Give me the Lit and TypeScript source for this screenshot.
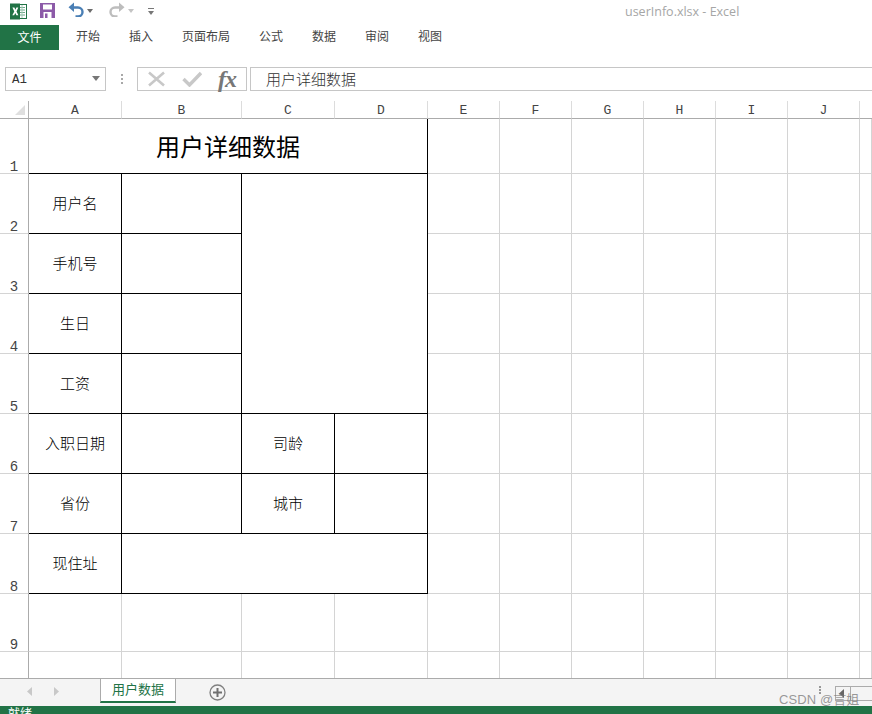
import { LitElement, html, css } from "lit";
import { customElement } from "lit/decorators.js";

const cols = ["A", "B", "C", "D", "E", "F", "G", "H", "I", "J"];
const rows = [1, 2, 3, 4, 5, 6, 7, 8, 9];

@customElement("app-root")
export class AppRoot extends LitElement {
  static styles = css`
    :host { display: block; width: 872px; height: 714px; background: #fff; overflow: hidden; position: relative;
      font-family: "Noto Sans CJK SC", "Noto Sans", sans-serif; }
    .app { display: flex; flex-direction: column; height: 714px; }
    .title { height: 25px; display: flex; align-items: flex-start; flex: none; }
    .title svg { display: block; flex: none; }
    .qat { display: flex; align-items: flex-start; padding-left: 10px; }
    .doc { margin-left: 471px; margin-top: 3px; font: 12.5px/18px "Open Sans", "Noto Sans", sans-serif; color: #a6a6a6; white-space: nowrap; }
    .tabs { height: 25px; display: flex; align-items: center; flex: none; font-size: 12px; color: #444; gap: 29px; }
    .tabs span { padding-bottom: 5px; }
    .file { width: 59px; height: 25px; padding-bottom: 3px; box-sizing: border-box; background: #217346; color: #fff; display: flex; align-items: center; justify-content: center; margin-right: -12px; }
    .fbar { margin-top: 17px; height: 24px; display: flex; flex: none; }
    .name { margin-left: 5px; width: 101px; box-sizing: border-box; border: 1px solid #c6c6c6; display: flex; align-items: center; justify-content: space-between;
      padding: 2px 5px 0 6px; font: 12.5px "Liberation Mono", monospace; color: #333; }
    .caret { width: 0; height: 0; border: 4px solid transparent; border-top: 5px solid #777; border-bottom: 0; margin-top: -4px; }
    .dots { width: 31px; display: flex; flex-direction: column; align-items: center; justify-content: center; gap: 2px; }
    .dots i { width: 2px; height: 2px; background: #a8a8a8; display: block; }
    .btns { width: 110px; box-sizing: border-box; border: 1px solid #c6c6c6; display: flex; align-items: center; flex: none; }
    .btns svg { display: block; }
    .fx { font: italic bold 24px/22px "Liberation Serif", serif; color: #777; margin-left: 16px; letter-spacing: -1px; }
    .input { margin-left: 3px; flex: 1; border: 1px solid #c6c6c6; border-right: 0; padding-left: 15px; font-size: 15px; font-weight: 300; line-height: 22px; color: #333; white-space: nowrap; }
    .sheet { margin-top: 10px; flex: 1; min-height: 0; overflow: hidden; display: grid;
      grid-template-columns: 29px 93px 120px 93px 93px repeat(6, 72px) 1fr;
      grid-template-rows: 18px 55px repeat(7, 60px) 58px 60px; }
    .ch { border-bottom: 1px solid #ababab; border-right: 1px solid #dcdcdc; text-align: center; font: 13px/20px "Liberation Mono", monospace; color: #444; }
    .chend { border-right: 0; }
    .corner { border-right: 1px solid #b0b0b0; position: relative; }
    .corner::after { content: ""; position: absolute; right: 3px; bottom: 3px; width: 0; height: 0; border-style: solid; border-width: 0 0 10px 10px; border-color: transparent transparent #dfdfdf transparent; }
    .rh { border-right: 1px solid #ababab; border-bottom: 1px solid #d4d4d4; font: 14px/12px "Liberation Mono", monospace; color: #444; display: flex; align-items: flex-end; justify-content: center; }
    .c { border-right: 1px solid #d4d4d4; border-bottom: 1px solid #d4d4d4; }
    .k { border-right: 1px solid #000; border-bottom: 1px solid #000; display: flex; align-items: center; justify-content: center; font-size: 15px; font-weight: 300; color: #000; background: #fff; white-space: nowrap; padding-bottom: 2px; box-sizing: border-box; }
    .big { font-size: 24px; font-weight: 400; padding-bottom: 1px; }
    .m4 { grid-column: span 4; }
    .m3 { grid-column: span 3; }
    .m2x4 { grid-column: span 2; grid-row: span 4; }
    .bottom { height: 28px; box-sizing: border-box; flex: none; background: #f4f4f4; border-top: 1px solid #ababab; display: flex; align-items: flex-start; }
    .bottom svg { display: block; flex: none; }
    .nav { display: flex; gap: 20px; margin: 8px 0 0 25px; width: 75px; }
    .tab { width: 76px; height: 24px; box-sizing: border-box; background: #fff; border: 1px solid #ababab; border-top: 0; border-bottom: 2px solid #217346;
      color: #217346; font-size: 13px; line-height: 20px; text-align: center; }
    .add { margin: 5px 0 0 33px; }
    .scroll { margin-left: auto; display: flex; margin-top: 7px; align-items: flex-start; }
    .vd { width: 2px; margin-right: 14px; display: flex; flex-direction: column; gap: 1px; }
    .vd i { display: block; width: 2px; height: 2px; background: #999; }
    .sb { width: 36px; height: 13px; border: 1px solid #ababab; border-right: 0; display: flex; }
    .sbarrow { border-right: 1px solid #ababab; }
    .status { height: 8px; flex: none; background: #217346; color: #fff; font-size: 12px; line-height: 12px; padding: 0 0 0 8px; overflow: hidden; white-space: nowrap; }
    .status span { display: block; margin-top: 1px; }
    .wm { position: absolute; left: 779px; top: 691px; font: 13px/18px "Liberation Sans", "Noto Sans CJK SC", sans-serif; color: rgba(120,120,120,.75); white-space: nowrap; letter-spacing: .1px; }
  `;

  render() {
    const filled = (r: number) => {
      const n = r >= 9 ? 11 : 7;
      return Array.from({ length: n }, () => html`<div class="c"></div>`);
    };
    const table: Record<number, unknown> = {
      1: html`<div class="k big m4">用户详细数据</div>`,
      2: html`<div class="k">用户名</div><div class="k"></div><div class="k m2x4"></div>`,
      3: html`<div class="k">手机号</div><div class="k"></div>`,
      4: html`<div class="k">生日</div><div class="k"></div>`,
      5: html`<div class="k">工资</div><div class="k"></div>`,
      6: html`<div class="k">入职日期</div><div class="k"></div><div class="k">司龄</div><div class="k"></div>`,
      7: html`<div class="k">省份</div><div class="k"></div><div class="k">城市</div><div class="k"></div>`,
      8: html`<div class="k">现住址</div><div class="k m3"></div>`,
    };
    return html`<div class="app">
      <div class="title">
        <div class="qat">
          <svg width="17" height="17" viewBox="0 0 17 17" style="margin-top:3px">
            <rect x="6" y="1.5" width="10.5" height="14" fill="#fff" stroke="#217346"/>
            <path d="M9 4.5h6M9 7h6M9 9.5h6M9 12h6" stroke="#6fa88a"/>
            <path d="M12 2v13" stroke="#a9cdb9"/>
            <rect x="0" y="0.5" width="10" height="16" fill="#217346"/>
            <path d="M2.4 4.5h2l1 2.3 1-2.3h1.9L6.5 8.4l1.9 3.9H6.4L5.3 9.9l-1.1 2.4H2.3l2-3.9z" fill="#fff"/>
          </svg>
          <svg width="15" height="15" viewBox="0 0 15 15" style="margin:3px 0 0 13px">
            <path d="M0 0h15v15H0z" fill="#8c5aa8"/>
            <rect x="3" y="1.5" width="9" height="5" fill="#fff"/>
            <rect x="3.5" y="9" width="8" height="6" fill="#fff"/>
            <rect x="5" y="10.5" width="2.5" height="4.5" fill="#8c5aa8"/>
          </svg>
          <svg width="16" height="15" viewBox="0 0 16 15" style="margin:2px 0 0 13px">
            <path d="M5 5.5h5a4 4 0 0 1 0 9H7.5" fill="none" stroke="#4a7fb5" stroke-width="2.4"/>
            <path d="M6 0.5v9.5L0.5 5.2z" fill="#4a7fb5"/>
          </svg>
          <svg width="6" height="4" viewBox="0 0 6 4" style="margin:9px 0 0 3px"><path d="M0 0h6L3 4z" fill="#6b6b6b"/></svg>
          <svg width="16" height="15" viewBox="0 0 16 15" style="margin:2px 0 0 16px">
            <path d="M11 5.5H6a4 4 0 0 0 0 9h2.5" fill="none" stroke="#bdbdbd" stroke-width="2.4"/>
            <path d="M10 0.5v9.5l5.5-4.8z" fill="#bdbdbd"/>
          </svg>
          <svg width="6" height="4" viewBox="0 0 6 4" style="margin:9px 0 0 3px"><path d="M0 0h6L3 4z" fill="#c4c4c4"/></svg>
          <svg width="6" height="8" viewBox="0 0 6 8" style="margin:8px 0 0 14px"><path d="M0 .5h6" stroke="#777"/><path d="M0 3h6L3 7z" fill="#777"/></svg>
        </div>
        <div class="doc">userInfo.xlsx - Excel</div>
      </div>
      <div class="tabs">
        <div class="file">文件</div>
        <span>开始</span><span>插入</span><span>页面布局</span><span>公式</span><span>数据</span><span>审阅</span><span>视图</span>
      </div>
      <div class="fbar">
        <div class="name">A1<span class="caret"></span></div>
        <div class="dots"><i></i><i></i><i></i></div>
        <div class="btns">
          <svg width="20" height="16" viewBox="0 0 20 16" style="margin-left:9px"><path d="M2 1.5l15 13M17 1.5l-15 13" stroke="#c8c8c8" stroke-width="2.6"/></svg>
          <svg width="20" height="16" viewBox="0 0 20 16" style="margin-left:15px"><path d="M1.5 8l6 6L19 2" fill="none" stroke="#c8c8c8" stroke-width="3.4"/></svg>
          <span class="fx">fx</span>
        </div>
        <div class="input">用户详细数据</div>
      </div>
      <div class="sheet">
        <div class="ch corner"></div>
        ${cols.map((c) => html`<div class="ch">${c}</div>`)}
        <div class="ch chend"></div>
        ${rows.map((r) => html`<div class="rh">${r}</div>${table[r] ?? ""}${filled(r)}`)}
        <div class="rh"></div>
        ${Array.from({ length: 11 }, () => html`<div class="c"></div>`)}
      </div>
      <div class="bottom">
        <div class="nav">
          <svg width="8" height="9" viewBox="0 0 8 9"><path d="M7 0v9L2 4.5z" fill="#c8c8c8"/></svg>
          <svg width="8" height="9" viewBox="0 0 8 9"><path d="M1 0v9l5-4.5z" fill="#c8c8c8"/></svg>
        </div>
        <div class="tab">用户数据</div>
        <svg class="add" width="17" height="17" viewBox="0 0 17 17">
          <circle cx="8.5" cy="8.5" r="7.5" fill="none" stroke="#808080" stroke-width="1.3"/>
          <path d="M8.5 4v9M4 8.5h9" stroke="#707070" stroke-width="2"/>
        </svg>
        <div class="scroll">
          <div class="vd"><i></i><i></i><i></i></div>
          <div class="sb">
            <svg class="sbarrow" width="14" height="13" viewBox="0 0 14 13"><path d="M8 2v9L3 6.5z" fill="#666"/></svg>
          </div>
        </div>
      </div>
      <div class="status"><span>就绪</span></div>
    </div>
    <div class="wm">CSDN @言姐</div>`;
  }
}
